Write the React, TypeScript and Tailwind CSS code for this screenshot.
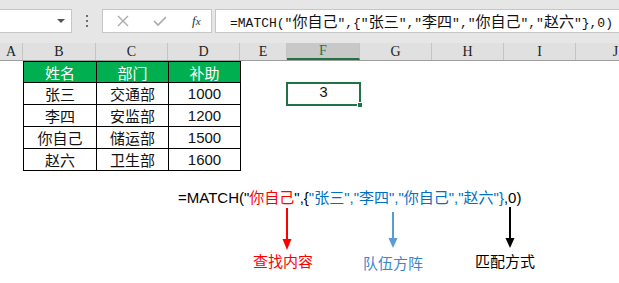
import React from "react";

const MONO = { fontFamily: '"Liberation Mono", "Noto Sans CJK SC", monospace' };
const SERIF = { fontFamily: '"Liberation Serif", "DejaVu Serif", serif' };

const cols = [
  { name: "A", w: 23 },
  { name: "B", w: 73 },
  { name: "C", w: 72 },
  { name: "D", w: 72 },
  { name: "E", w: 47 },
  { name: "F", w: 73 },
  { name: "G", w: 72 },
  { name: "H", w: 72 },
  { name: "I", w: 72 },
  { name: "J", w: 80 },
];

const rows = [
  ["张三", "交通部", "1000"],
  ["李四", "安监部", "1200"],
  ["你自己", "储运部", "1500"],
  ["赵六", "卫生部", "1600"],
];

// split a formula into ascii / cjk runs so each gets its own width
function runs(s: string) {
  const out: { t: string; cjk: boolean }[] = [];
  for (const ch of s) {
    const cjk = /[\u3000-\u9fff]/.test(ch);
    const last = out[out.length - 1];
    if (last && last.cjk === cjk) last.t += ch;
    else out.push({ t: ch, cjk });
  }
  return out;
}

function FormulaBarText({ text }: { text: string }) {
  return (
    <span className="whitespace-pre text-[#111]">
      {runs(text).map((r, i) =>
        r.cjk ? (
          <span key={i} className="text-[15px]" style={{ fontFamily: '"Noto Sans CJK SC", sans-serif' }}>
            {r.t}
          </span>
        ) : (
          <span key={i} className="text-[13px]" style={MONO}>
            {r.t}
          </span>
        )
      )}
    </span>
  );
}

function Toolbar() {
  return (
    <div className="flex h-[43px] items-start bg-[#e6e6e6] pt-[9px]">
      <div className="relative h-[24px] w-[72px] border border-l-0 border-[#c6c6c6] bg-white">
        <svg className="absolute left-[57px] top-[9px]" width="8" height="5" viewBox="0 0 8 5">
          <polygon points="0,0 8,0 4,4" fill="#555" />
        </svg>
      </div>
      <div className="flex w-[30px] flex-col items-center gap-[3px] pt-[6px]">
        <span className="h-[2px] w-[2px] bg-[#6d6d6d]" />
        <span className="h-[2px] w-[2px] bg-[#6d6d6d]" />
        <span className="h-[2px] w-[2px] bg-[#6d6d6d]" />
      </div>
      <div className="flex h-[24px] w-[110px] items-center border border-[#c6c6c6] bg-white">
        <svg className="ml-[14px]" width="12" height="12" viewBox="0 0 12 12">
          <path d="M1 1 L11 11 M11 1 L1 11" stroke="#a9a9a9" strokeWidth="1.3" />
        </svg>
        <svg className="ml-[24px]" width="14" height="12" viewBox="0 0 14 12">
          <path d="M1 6 L5 10 L13 2" stroke="#a9a9a9" strokeWidth="1.6" fill="none" />
        </svg>
        <span className="ml-[25px] text-[13px] italic text-[#333]" style={SERIF}>
          f<span className="text-[11px]">x</span>
        </span>
      </div>
      <div className="ml-[3px] flex h-[24px] flex-1 items-center border border-r-0 border-[#c6c6c6] bg-white pl-[14px]">
        <FormulaBarText text={'=MATCH("你自己",{"张三","李四","你自己","赵六"},0)'} />
      </div>
    </div>
  );
}

function ColumnHeader() {
  return (
    <div className="flex h-[18px] border-b border-[#9e9e9e] bg-[#e0e0e0]">
      {cols.map((c) => (
        <div
          key={c.name}
          style={{ width: c.w, ...SERIF }}
          className={
            c.name === "F"
              ? "flex shrink-0 items-center justify-center border-r border-[#c4c4c4] border-b-2 border-b-[#217346] bg-[#c8c8c8] text-[14px] text-[#217346]"
              : "flex shrink-0 items-center justify-center border-r border-[#c4c4c4] text-[14px] text-[#222]"
          }
        >
          {c.name}
        </div>
      ))}
    </div>
  );
}

const cjkCell = { fontFamily: '"Noto Sans CJK SC", sans-serif' };
const numCell = { fontFamily: '"Liberation Sans", Arial, sans-serif' };

function Sheet() {
  return (
    <div className="flex">
      <div className="w-[23px] shrink-0" />
      <table className="w-[218px] shrink-0 border-collapse text-[15px]">
        <thead>
          <tr className="h-[21px] bg-[#00b050] text-white" style={cjkCell}>
            <th className="w-[73px] border border-black p-0 font-normal leading-[19px]">姓名</th>
            <th className="w-[72px] border border-black p-0 font-normal leading-[19px]">部门</th>
            <th className="w-[72px] border border-black p-0 font-normal leading-[19px]">补助</th>
          </tr>
        </thead>
        <tbody>
          {rows.map((r) => (
            <tr key={r[0]} className="h-[22px] text-[#111]">
              <td className="border border-black p-0 text-center leading-[20px]" style={cjkCell}>
                {r[0]}
              </td>
              <td className="border border-black p-0 text-center leading-[20px]" style={cjkCell}>
                {r[1]}
              </td>
              <td className="border border-black p-0 text-center leading-[20px]" style={numCell}>
                {r[2]}
              </td>
            </tr>
          ))}
        </tbody>
      </table>
      <div className="w-[45px] shrink-0" />
      <div className="pt-[21px]">
        <div className="relative flex h-[24px] w-[75px] items-center justify-center border-2 border-[#217346]">
          <span className="text-[15px] text-[#111]" style={MONO}>
            3
          </span>
          <span className="absolute -bottom-[4px] -right-[4px] h-[6px] w-[6px] border border-white bg-[#217346]" />
        </div>
      </div>
    </div>
  );
}

const ann = { fontFamily: '"Liberation Sans", "Noto Sans CJK SC", Arial, sans-serif' };

function Annotation() {
  return (
    <div className="mt-[18px]">
      <div className="h-[18px] whitespace-pre pl-[178px] text-[15px] leading-[18px] text-black" style={ann}>
        {'=MATCH("'}
        <span className="text-[#ff0000]">你自己</span>
        {'",{'}
        <span className="text-[#0070c0]">{'"张三","李四","你自己","赵六"}'}</span>
        {",0)"}
      </div>
      <svg width="619" height="44" viewBox="0 0 619 44" className="block">
        <line x1="287" y1="1" x2="287" y2="34" stroke="#ff0000" strokeWidth="2" />
        <polygon points="282.5,32 291.5,32 287,43" fill="#ff0000" />
        <line x1="393" y1="5" x2="393" y2="32" stroke="#5b9bd5" strokeWidth="2" />
        <polygon points="388.5,31 397.5,31 393,41" fill="#5b9bd5" />
        <line x1="510" y1="0" x2="510" y2="32" stroke="#000" strokeWidth="2" />
        <polygon points="505.5,31 514.5,31 510,41" fill="#000" />
      </svg>
      <div className="flex h-[20px] text-[15px] leading-[20px]" style={cjkCell}>
        <span className="ml-[253px] text-[#ff0000]">查找内容</span>
        <span className="ml-[50px] mt-[2px] text-[#3a86cc]">队伍方阵</span>
        <span className="ml-[52px] text-black">匹配方式</span>
      </div>
    </div>
  );
}

export default function App() {
  return (
    <div className="h-[283px] w-[619px] overflow-hidden bg-white">
      <Toolbar />
      <ColumnHeader />
      <Sheet />
      <Annotation />
    </div>
  );
}
